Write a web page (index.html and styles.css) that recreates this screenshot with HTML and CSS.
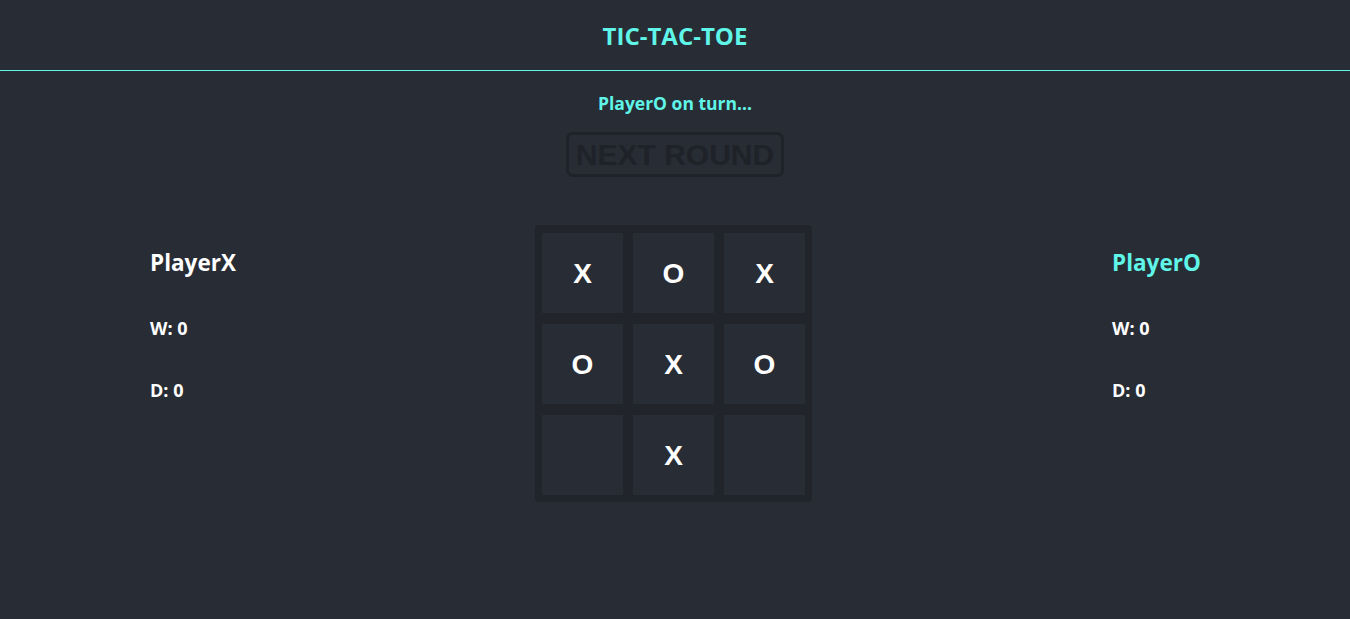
FILE: index.html
```html
<!DOCTYPE html>
<html>
<head>
<meta charset="utf-8">
<link rel="stylesheet" href="styles.css">
</head>
<body>
<header class="header"><h1 class="title">TIC-TAC-TOE</h1></header>
<main class="main">
  <p class="status">PlayerO on turn...</p>
  <button class="next">NEXT ROUND</button>
  <section class="game">
    <div class="player">
      <h2 class="player-name">PlayerX</h2>
      <p class="stat">W: 0</p>
      <p class="stat">D: 0</p>
    </div>
    <div class="board">
      <div class="cell">X</div><div class="cell">O</div><div class="cell">X</div>
      <div class="cell">O</div><div class="cell">X</div><div class="cell">O</div>
      <div class="cell"></div><div class="cell">X</div><div class="cell"></div>
    </div>
    <div class="player">
      <h2 class="player-name active">PlayerO</h2>
      <p class="stat">W: 0</p>
      <p class="stat">D: 0</p>
    </div>
  </section>
</main>
</body>
</html>
```
FILE: styles.css
```css
html, body {
  margin: 0;
  padding: 0;
  background: #282c34;
  height: 100%;
}
body {
  font-family: "Open Sans", "Noto Sans", sans-serif;
  color: #ffffff;
}
.header {
  height: 70px;
  border-bottom: 1px solid #5ff5e8;
  display: flex;
  align-items: center;
  justify-content: center;
}
.title {
  margin: 0;
  font-size: 24px;
  font-weight: 700;
  color: #5ff5e8;
  letter-spacing: 0;
}
.main {
  display: flex;
  flex-direction: column;
  align-items: center;
}
.status {
  margin: 20px 0 0;
  height: 24px;
  line-height: 24px;
  font-size: 17.5px;
  font-weight: 700;
  color: #5ff5e8;
}
.next {
  margin-top: 17px;
  width: 218px;
  height: 45px;
  box-sizing: border-box;
  background: transparent;
  border: 3px solid #1f2228;
  border-radius: 7px;
  color: #1f2228;
  font-family: "Liberation Sans", Arial, sans-serif;
  font-weight: 700;
  font-size: 30px;
  padding: 0;
  line-height: 1;
}
.game {
  align-self: stretch;
  display: flex;
  justify-content: space-between;
  align-items: flex-start;
  padding: 0 150px;
  margin-top: 48px;
}
.player {
  width: 88px;
  padding-top: 21px;
}
.player-name {
  margin: 0;
  font-size: 22.5px;
  font-weight: 700;
  line-height: 34px;
  color: #ffffff;
  white-space: nowrap;
}
.player-name.active {
  color: #5ff5e8;
}
.stat {
  margin: 37px 0 0;
  font-size: 18px;
  font-weight: 700;
  line-height: 22px;
}
.stat + .stat {
  margin-top: 40px;
}
.board {
  display: grid;
  grid-template-columns: repeat(3, 81px);
  grid-template-rows: repeat(3, 80px);
  column-gap: 10px;
  row-gap: 11px;
  padding: 8px 7px 7px;
  background: #21242a;
  border-radius: 4px;
  margin-left: -3px;
}
.cell {
  background: #282c34;
  display: flex;
  align-items: center;
  justify-content: center;
  font-family: "Liberation Sans", Arial, sans-serif;
  font-weight: 700;
  font-size: 28px;
  color: #ffffff;
  padding-top: 2px;
}
```
